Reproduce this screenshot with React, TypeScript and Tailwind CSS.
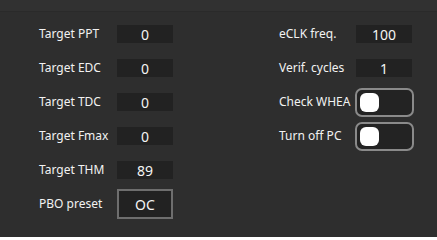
import React from 'react'

const font = { fontFamily: '"Noto Sans", "Open Sans", sans-serif' }

function Field({ label, value }: { label: string; value: string }) {
  return (
    <div className="flex h-[34px] items-center">
      <span className="w-[78px] text-[12px] text-[#f2f2f2]">{label}</span>
      <div className="flex h-[18px] w-[56px] items-center justify-center bg-[#222222] text-[14px] text-[#f4f4f4]">
        {value}
      </div>
    </div>
  )
}

function Toggle({ label }: { label: string }) {
  return (
    <div className="flex h-[34px] items-center">
      <span className="w-[76px] text-[12px] text-[#f2f2f2]">{label}</span>
      <div className="flex h-[29px] w-[59px] items-center rounded-[7px] border-2 border-[#8a8a8a] bg-[#232323] pl-[3px]">
        <div className="h-[19px] w-[19px] rounded-[6px] bg-white" />
      </div>
    </div>
  )
}

export default function App() {
  return (
    <div className="relative h-[237px] w-[437px] overflow-hidden bg-[#2e2e2e]" style={font}>
      <div className="h-[12px] border-b border-[#2a2a2a] bg-[#313131]" />
      <div className="flex pt-[5px]">
        <div className="ml-[39px] flex flex-col">
          <Field label="Target PPT" value="0" />
          <Field label="Target EDC" value="0" />
          <Field label="Target TDC" value="0" />
          <Field label="Target Fmax" value="0" />
          <Field label="Target THM" value="89" />
          <div className="flex h-[34px] items-center">
            <span className="w-[78px] text-[12px] text-[#f2f2f2]">PBO preset</span>
            <div className="flex h-[30px] w-[56px] items-center justify-center border-2 border-[#6e6e6e] bg-[#222222] text-[14px] text-[#f4f4f4]">
              OC
            </div>
          </div>
        </div>
        <div className="ml-[106px] flex flex-col">
          <div className="flex h-[34px] items-center">
            <span className="w-[77px] text-[12px] text-[#f2f2f2]">eCLK freq.</span>
            <div className="flex h-[18px] w-[56px] items-center justify-center bg-[#222222] text-[14px] text-[#f4f4f4]">
              100
            </div>
          </div>
          <div className="flex h-[34px] items-center">
            <span className="w-[77px] text-[12px] text-[#f2f2f2]">Verif. cycles</span>
            <div className="flex h-[18px] w-[56px] items-center justify-center bg-[#222222] text-[14px] text-[#f4f4f4]">
              1
            </div>
          </div>
          <Toggle label="Check WHEA" />
          <Toggle label="Turn off PC" />
        </div>
      </div>
    </div>
  )
}
